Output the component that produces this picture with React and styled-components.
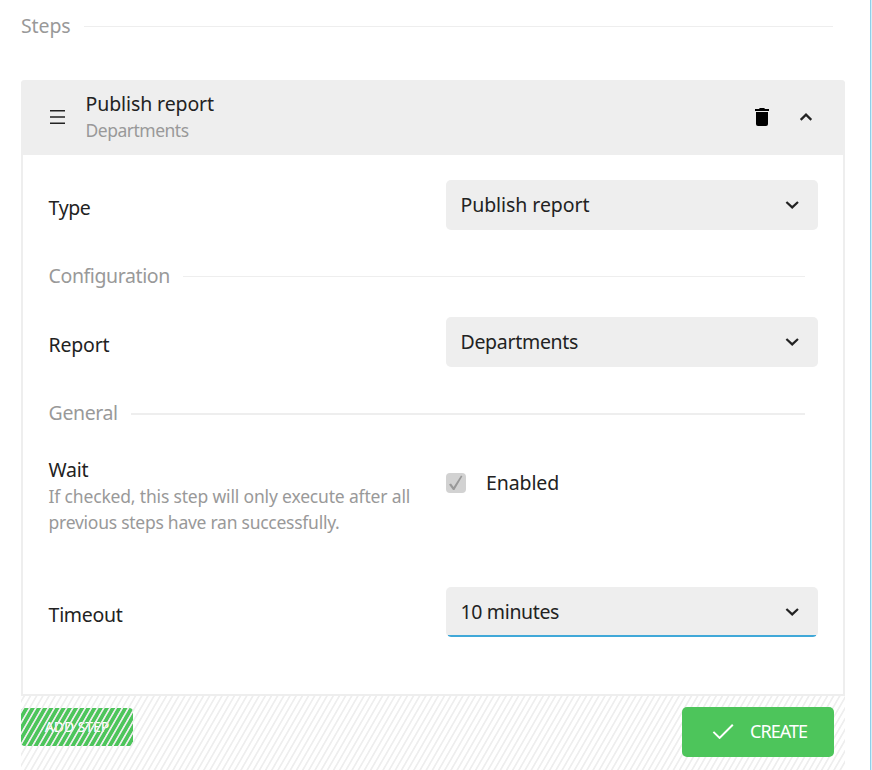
import React from 'react';
import styled, { createGlobalStyle } from 'styled-components';

const GlobalStyle = createGlobalStyle`
  * {
    box-sizing: border-box;
  }

  body {
    margin: 0;
    background: #fff;
    color: #222;
    font-family: 'Noto Sans', sans-serif;
    font-size: 19.5px;
    line-height: 26px;
    overflow: hidden;
  }
`;

const ChevronIcon = ({ up }) => (
  <svg width="14" height="8" viewBox="0 0 14 8" fill="none" stroke="#222" strokeWidth="2.2">
    <path d={up ? 'M1.7 6.9 L7 1.6 L12.3 6.9' : 'M1.4 1 L7.2 6.4 L13 1'} />
  </svg>
);

const TrashIcon = () => (
  <svg width="14" height="18" viewBox="0 0 14 18" fill="#000">
    <path d="M0 1h4l.8-1h4.4L10 1h4v2H0z" />
    <path d="M1 4h12v12a2 2 0 0 1-2 2H3a2 2 0 0 1-2-2z" />
  </svg>
);

const DragIcon = () => (
  <svg width="15" height="14" viewBox="0 0 15 14" fill="#222">
    <path d="M0 0h15v1.4H0zM0 6.2h15v1.6H0zM0 12.6h15V14H0z" />
  </svg>
);

const Divider = ({ label, spacing, thick }) => (
  <DividerRow>
    <DividerLabel $spacing={spacing}>{label}</DividerLabel>
    <DividerLine $thick={thick} />
  </DividerRow>
);

const SelectField = ({ value, spacing, focused }) => (
  <Select $focused={focused}>
    <Text $spacing={spacing}>{value}</Text>
    <ChevronIcon />
  </Select>
);

const App = () => (
  <Page>
    <GlobalStyle />
    <StepsHeader>
      <Divider label="Steps" spacing="-0.1px" />
    </StepsHeader>
    <Card>
      <CardHeader>
        <DragIcon />
        <Titles>
          <Text $spacing="-0.1px">Publish report</Text>
          <Hint $spacing="-0.5px">Departments</Hint>
        </Titles>
        <TrashIcon />
        <ChevronIcon up />
      </CardHeader>
      <CardBody>
        <Row>
          <Label $spacing="-0.4px">Type</Label>
          <SelectField value="Publish report" spacing="-0.07px" />
        </Row>
        <Section>
          <Divider label="Configuration" spacing="-0.4px" />
        </Section>
        <Row>
          <Label $spacing="-0.2px">Report</Label>
          <SelectField value="Departments" spacing="-0.3px" />
        </Row>
        <Section>
          <Divider label="General" spacing="-0.4px" thick />
        </Section>
        <WaitRow>
          <div>
            <Text $spacing="-0.3px">Wait</Text>
            <Hint $spacing="-0.17px">If checked, this step will only execute after all</Hint>
            <Hint $spacing="-0.26px">previous steps have ran successfully.</Hint>
          </div>
          <CheckField>
            <Checkbox>
              <svg width="14" height="16" viewBox="0 0 14 16" fill="#999">
                <path d="M0 9.6 L2 8.4 L4.6 12 L12 0.6 L13.4 1.2 L5.4 15 L4 15z" />
              </svg>
            </Checkbox>
            <Text $spacing="-0.1px">Enabled</Text>
          </CheckField>
        </WaitRow>
        <Row>
          <Label $spacing="-0.3px">Timeout</Label>
          <SelectField value="10 minutes" spacing="-0.35px" focused />
        </Row>
      </CardBody>
    </Card>
    <Footer>
      <AddButton>
        <Text $spacing="-0.1px">ADD STEP</Text>
      </AddButton>
      <CreateButton>
        <svg width="22" height="16" viewBox="0 0 22 16" fill="none" stroke="#fff" strokeWidth="2">
          <path d="M1.4 8.9 L7.6 14.9 L20.8 1.7" />
        </svg>
        <Text $spacing="-0.95px">CREATE</Text>
      </CreateButton>
    </Footer>
  </Page>
);

export default App;

// Styled components
const Page = styled.div`
  width: 872px;
  height: 770px;
  padding: 13px 26px 0 21px;
  background: linear-gradient(to right, #8fcfe9 1px, #d5eef8 1px) right / 2px 100% no-repeat;
  overflow: hidden;
`;

const Text = styled.div`
  letter-spacing: ${({ $spacing }) => $spacing};
  white-space: nowrap;
  width: max-content;
`;

const Label = styled(Text)`
  padding-top: 6px;
`;

const Hint = styled(Text)`
  color: #999;
  font-size: 17.5px;
`;

const DividerRow = styled.div`
  display: flex;
  align-items: center;
  height: 26px;
`;

const DividerLabel = styled(Text)`
  color: #999;
`;

const DividerLine = styled.div`
  flex: 1;
  height: ${({ $thick }) => ($thick ? 2 : 1)}px;
  margin-top: ${({ $thick }) => ($thick ? 2 : 0)}px;
  margin-left: 13px;
  background: #eee;
`;

const StepsHeader = styled.div`
  padding-right: 13px;
`;

const Card = styled.section`
  width: 824px;
  height: 616px;
  margin-top: 41px;
  border: 2px solid #eee;
  border-top: 0;
  border-radius: 4px 4px 0 0;
`;

const CardHeader = styled.header`
  display: flex;
  align-items: center;
  height: 75px;
  margin: 0 -2px;
  padding: 0 32px 2px 29px;
  gap: 30px;
  background: #eee;
  border-radius: 4px 4px 0 0;
`;

const Titles = styled.div`
  flex: 1;
  margin-left: -9.5px;
`;

const CardBody = styled.div`
  padding: 25px 25px 0 25.6px;
`;

const Row = styled.div`
  display: grid;
  grid-template-columns: 397.4px 372px;
  align-items: center;
  height: 50px;
`;

const Section = styled.div`
  padding: 33px 13px 28px 0;
`;

const Select = styled.div`
  display: flex;
  align-items: center;
  justify-content: space-between;
  height: 50px;
  padding: 0 19px 0 14.5px;
  border-radius: 5px;
  background: ${({ $focused }) =>
    $focused
      ? 'linear-gradient(#40a8d8, #40a8d8) center bottom / calc(100% - 4px) 2px no-repeat #eee'
      : '#eee'};
`;

const WaitRow = styled.div`
  display: grid;
  grid-template-columns: 397.4px 372px;
  height: 133px;
  padding-top: 3px;
`;

const CheckField = styled.div`
  display: flex;
  align-items: center;
  gap: 20px;
  height: 52px;
`;

const Checkbox = styled.div`
  display: flex;
  align-items: center;
  justify-content: center;
  width: 20px;
  height: 20px;
  background: #d2d2d2;
  border-radius: 4px;
`;

const Footer = styled.footer`
  position: relative;
  display: flex;
  align-items: flex-start;
  justify-content: space-between;
  width: 824px;
  height: 74px;
  padding: 11px 11px 0 0;

  /* hatching lies over the disabled add button */
  &::before {
    content: '';
    position: absolute;
    inset: 0;
    background: repeating-linear-gradient(
      -60deg,
      rgba(238, 238, 238, 0) 0 2.9px,
      #eee 3.7px 4.6px,
      rgba(238, 238, 238, 0) 5.35px
    );
  }
`;

const AddButton = styled.div`
  display: flex;
  align-items: center;
  justify-content: center;
  width: 112px;
  height: 38px;
  margin-top: 1px;
  border-radius: 4px;
  color: #fff;
  font-size: 14px;
  font-weight: 500;
  background: #4dc55b;
`;

const CreateButton = styled.div`
  position: relative;
  z-index: 1;
  display: flex;
  align-items: center;
  width: 152px;
  height: 50px;
  padding-left: 30px;
  padding-bottom: 2px;
  gap: 16px;
  border-radius: 5px;
  color: #fff;
  font-size: 18px;
  background: #4dc55b;
`;
